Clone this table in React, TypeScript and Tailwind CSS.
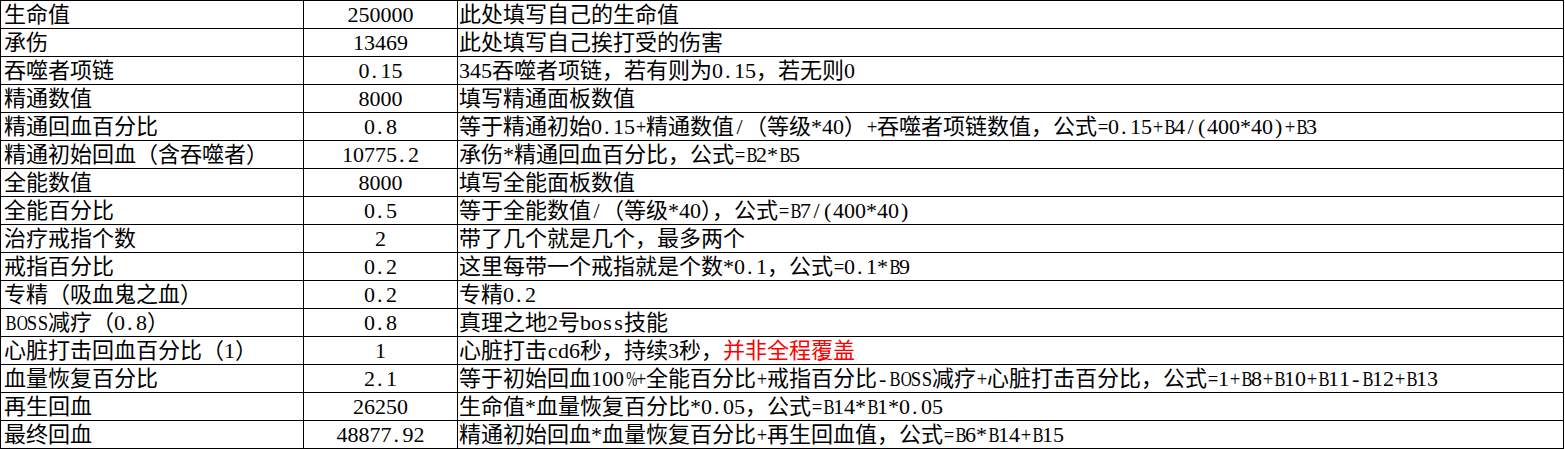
import type { ReactNode } from 'react';

// Excel's SimSun gives every ASCII char a half-em cell; mimic that with fixed-width spans
const squeeze: Record<string, string> = {
  '%': 'scale-x-[0.6]',
  B: 'scale-x-[0.75]',
  O: 'scale-x-[0.7]',
  S: 'scale-x-[0.85]',
  '+': 'scale-x-[0.85]',
  '=': 'scale-x-[0.85]',
};

function Cells({ text }: { text: string }) {
  const out: ReactNode[] = [];
  let run = '';
  [...text].forEach((ch, i) => {
    if (ch.charCodeAt(0) < 128) {
      if (run) {
        out.push(run);
        run = '';
      }
      const align = ch === '.' ? 'pl-[2px] text-left' : 'text-center';
      out.push(
        <span key={i} className={`inline-block w-[0.5em] ${align} ${squeeze[ch] ?? ''}`}>
          {ch}
        </span>,
      );
    } else {
      run += ch;
    }
  });
  if (run) out.push(run);
  return <>{out}</>;
}

const rows: { name: string; value: string; note: string; red?: string }[] = [
  { name: '生命值', value: '250000', note: '此处填写自己的生命值' },
  { name: '承伤', value: '13469', note: '此处填写自己挨打受的伤害' },
  { name: '吞噬者项链', value: '0.15', note: '345吞噬者项链，若有则为0.15，若无则0' },
  { name: '精通数值', value: '8000', note: '填写精通面板数值' },
  {
    name: '精通回血百分比',
    value: '0.8',
    note: '等于精通初始0.15+精通数值/（等级*40）+吞噬者项链数值，公式=0.15+B4/(400*40)+B3',
  },
  { name: '精通初始回血（含吞噬者）', value: '10775.2', note: '承伤*精通回血百分比，公式=B2*B5' },
  { name: '全能数值', value: '8000', note: '填写全能面板数值' },
  { name: '全能百分比', value: '0.5', note: '等于全能数值/（等级*40），公式=B7/(400*40)' },
  { name: '治疗戒指个数', value: '2', note: '带了几个就是几个，最多两个' },
  { name: '戒指百分比', value: '0.2', note: '这里每带一个戒指就是个数*0.1，公式=0.1*B9' },
  { name: '专精（吸血鬼之血）', value: '0.2', note: '专精0.2' },
  { name: 'BOSS减疗（0.8）', value: '0.8', note: '真理之地2号boss技能' },
  { name: '心脏打击回血百分比（1）', value: '1', note: '心脏打击cd6秒，持续3秒，', red: '并非全程覆盖' },
  {
    name: '血量恢复百分比',
    value: '2.1',
    note: '等于初始回血100%+全能百分比+戒指百分比-BOSS减疗+心脏打击百分比，公式=1+B8+B10+B11-B12+B13',
  },
  { name: '再生回血', value: '26250', note: '生命值*血量恢复百分比*0.05，公式=B14*B1*0.05' },
  { name: '最终回血', value: '48877.92', note: '精通初始回血*血量恢复百分比+再生回血值，公式=B6*B14+B15' },
];

export default function App() {
  return (
    <div className="min-h-[449px] w-[1565px] bg-white">
      <div
        className="w-[1564px] border-l border-t border-black text-[22px] leading-[27px] text-black"
        style={{ fontFamily: '"Liberation Serif", "Noto Sans CJK SC", serif' }}
      >
        {rows.map((row) => (
          <div key={row.name} className="grid h-[28px] grid-cols-[303px_154px_1106px]">
            <div className="overflow-hidden whitespace-nowrap border-b border-r border-black pl-[3px]">
              <Cells text={row.name} />
            </div>
            <div className="overflow-hidden whitespace-nowrap border-b border-r border-black text-center">
              <Cells text={row.value} />
            </div>
            <div className="overflow-hidden whitespace-nowrap border-b border-r border-black pl-[1px]">
              <Cells text={row.note} />
              {row.red && <span className="text-[#ff0000]">{row.red}</span>}
            </div>
          </div>
        ))}
      </div>
    </div>
  );
}
